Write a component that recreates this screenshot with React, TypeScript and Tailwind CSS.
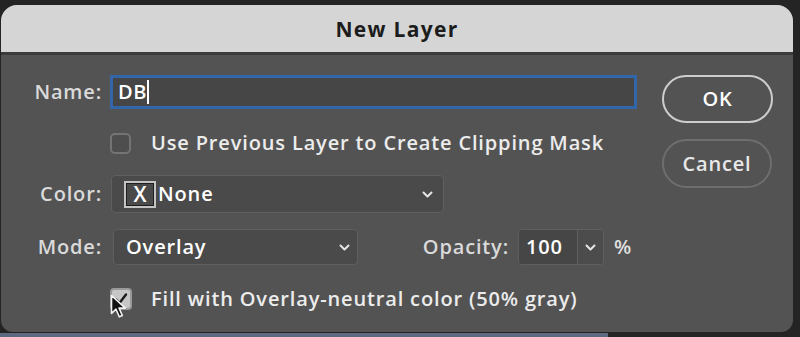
import React from 'react';

function Chevron({ className = '' }: { className?: string }) {
  return (
    <svg className={className} width="11" height="7" viewBox="0 0 11 7" fill="none">
      <path d="M1.5 1.5l4 4 4-4" stroke="#e6e6e6" strokeWidth="2" strokeLinecap="round" strokeLinejoin="round" />
    </svg>
  );
}

function Cursor() {
  return (
    <svg className="absolute left-[0px] top-[6px]" width="18" height="26" viewBox="0 0 18 26">
      <path d="M1.5 1.5v18l4.5-4.3 3.3 7.6 3-1.3-3.2-7.4h6.2z" fill="#111" stroke="#f2f2f2" strokeWidth="1.6" strokeLinejoin="round" />
    </svg>
  );
}

export default function App() {
  return (
    <div
      className="w-[800px] h-[337px] bg-[#242424] flex flex-col overflow-hidden text-[20px] font-semibold tracking-[0.85px] text-[#e4e4e4]"
      style={{ fontFamily: '"Open Sans", Arial, sans-serif' }}
    >
      <div className="mt-[5px] ml-[1px] w-[792px] h-[328px] rounded-t-[16px] rounded-b-[12px] bg-[#535353] overflow-hidden flex flex-col">
        {/* Title bar */}
        <div className="h-[50px] bg-[#d5d5d5] border-b-[3px] border-[#3b3b3b] flex items-center justify-center">
          <span className="text-[21px] font-bold text-[#1c1c1c] tracking-[1.3px] translate-y-[1px]">New Layer</span>
        </div>

        <div className="flex">
          {/* Left column */}
          <div className="w-[636px] flex flex-col pt-[20px]">
            {/* Name */}
            <div className="flex items-center h-[34px]">
              <span className="w-[101px] text-right text-[#dadada]">Name:</span>
              <div className="ml-[8px] w-[527px] h-[34px] bg-[#464646] border-[3px] border-[#3366a8] flex items-center pl-[5px]">
                <span className="text-white tracking-[0.5px]">DB</span>
                <span className="w-[2px] h-[24px] bg-white"></span>
              </div>
            </div>

            {/* Clipping mask */}
            <div className="flex items-center mt-[24px] h-[20px]">
              <div className="ml-[109px] w-[21px] h-[21px] rounded-[5px] border-2 border-[#747474] bg-[#4e4e4e]"></div>
              <span className="ml-[20px] text-[#ececec]">Use Previous Layer to Create Clipping Mask</span>
            </div>

            {/* Color */}
            <div className="flex items-center mt-[22px] h-[38px]">
              <span className="w-[101px] text-right text-[#dadada]">Color:</span>
              <div className="ml-[9px] w-[333px] h-[38px] bg-[#4a4a4a] border border-[#5f5f5f] rounded-[4px] flex items-center pl-[12px] pr-[10px]">
                <div className="w-[32px] h-[27px] border-2 border-[#c4c4c4] bg-[#1e1e1e] p-[1px] flex items-center justify-center">
                  <div className="w-full h-full bg-[#4a4a4a] flex items-center justify-center text-[21px] leading-none text-white tracking-normal">X</div>
                </div>
                <span className="ml-[2px] text-white">None</span>
                <Chevron className="ml-auto" />
              </div>
            </div>

            {/* Mode / Opacity */}
            <div className="flex items-center mt-[16px] h-[36px]">
              <span className="w-[101px] text-right text-[#dadada]">Mode:</span>
              <div className="ml-[11px] w-[245px] h-[36px] bg-[#4a4a4a] border border-[#5f5f5f] rounded-[4px] flex items-center pl-[12px] pr-[7px]">
                <span className="text-white">Overlay</span>
                <Chevron className="ml-auto" />
              </div>
              <span className="ml-auto w-[90px] text-right text-[#dadada]">Opacity:</span>
              <div className="ml-[9px] h-[36px] flex border border-[#5f5f5f] rounded-[4px] overflow-hidden">
                <div className="w-[58px] bg-[#464646] flex items-center pl-[7px] text-white">100</div>
                <div className="w-[26px] bg-[#4c4c4c] border-l border-[#5f5f5f] flex items-center justify-center">
                  <Chevron />
                </div>
              </div>
              <span className="ml-[10px] w-[23px] text-[#e0e0e0]">%</span>
            </div>

            {/* Fill */}
            <div className="flex items-center mt-[24px] h-[20px]">
              <div className="relative ml-[109px] w-[22px] h-[22px]">
                <div className="w-[22px] h-[22px] rounded-[4px] border-2 border-[#9a9a9a] bg-[#c6c6c6] flex items-center justify-center">
                  <svg width="14" height="14" viewBox="0 0 14 14">
                    <path d="M2 7.5l3.5 3.5L12 2.5" fill="none" stroke="#1a1a1a" strokeWidth="2.4" strokeLinecap="round" strokeLinejoin="round" />
                  </svg>
                </div>
                <Cursor />
              </div>
              <span className="ml-[19px] text-[#ececec]">Fill with Overlay-neutral color (50% gray)</span>
            </div>
          </div>

          {/* Buttons */}
          <div className="ml-[25px] pt-[20px] flex flex-col">
            <button className="w-[111px] h-[48px] rounded-full border-2 border-[#cdcdcd] text-white text-[20px] font-semibold tracking-[0.85px]">OK</button>
            <button className="mt-[16px] w-[110px] h-[49px] rounded-full border-2 border-[#6e6e6e] text-[#e8e8e8] text-[20px] font-semibold tracking-[0.85px]">Cancel</button>
          </div>
        </div>
      </div>
      <div className="flex mt-[1px]">
        <div className="w-[608px] h-[4px] bg-[#5b6a80]"></div>
      </div>
    </div>
  );
}
